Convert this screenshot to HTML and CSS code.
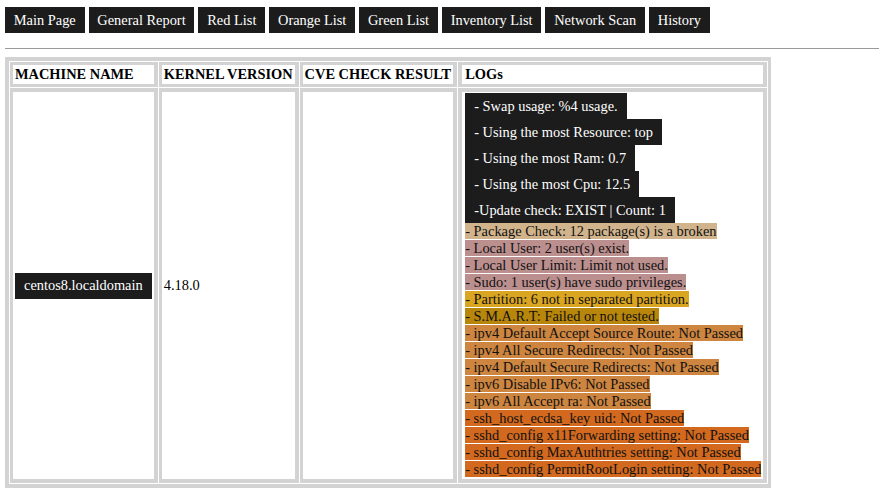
FILE: index.html
```html
<!DOCTYPE html>
<html>
<head>
<meta charset="utf-8">
<title>Report</title>
<link rel="stylesheet" href="styles.css">
</head>
<body>
<nav class="nav">
  <a class="btn">Main Page</a>
  <a class="btn">General Report</a>
  <a class="btn">Red List</a>
  <a class="btn">Orange List</a>
  <a class="btn">Green List</a>
  <a class="btn">Inventory List</a>
  <a class="btn">Network Scan</a>
  <a class="btn">History</a>
</nav>
<hr class="rule">
<table class="report">
  <thead>
    <tr>
      <th>MACHINE NAME</th>
      <th>KERNEL VERSION</th>
      <th>CVE CHECK RESULT</th>
      <th class="logcol">LOGs</th>
    </tr>
  </thead>
  <tbody>
    <tr>
      <td><span class="btn host">centos8.localdomain</span></td>
      <td>4.18.0</td>
      <td></td>
      <td class="logs logcol">
        <div class="btn box">- Swap usage: %4 usage.</div>
        <div class="btn box">- Using the most Resource: top</div>
        <div class="btn box">- Using the most Ram: 0.7</div>
        <div class="btn box">- Using the most Cpu: 12.5</div>
        <div class="btn box">-Update check: EXIST | Count: 1</div>
        <span class="l tan">- Package Check: 12 package(s) is a broken</span><br>
        <span class="l rosy">- Local User: 2 user(s) exist.</span><br>
        <span class="l rosy">- Local User Limit: Limit not used.</span><br>
        <span class="l rosy">- Sudo: 1 user(s) have sudo privileges.</span><br>
        <span class="l gold">- Partition: 6 not in separated partition.</span><br>
        <span class="l dgold">- S.M.A.R.T: Failed or not tested.</span><br>
        <span class="l peru">- ipv4 Default Accept Source Route: Not Passed</span><br>
        <span class="l peru">- ipv4 All Secure Redirects: Not Passed</span><br>
        <span class="l peru">- ipv4 Default Secure Redirects: Not Passed</span><br>
        <span class="l peru">- ipv6 Disable IPv6: Not Passed</span><br>
        <span class="l peru">- ipv6 All Accept ra: Not Passed</span><br>
        <span class="l choc">- ssh_host_ecdsa_key uid: Not Passed</span><br>
        <span class="l choc">- sshd_config x11Forwarding setting: Not Passed</span><br>
        <span class="l choc">- sshd_config MaxAuthtries setting: Not Passed</span><br>
        <span class="l choc">- sshd_config PermitRootLogin setting: Not Passed</span>
      </td>
    </tr>
  </tbody>
</table>
</body>
</html>
```
FILE: styles.css
```css
html, body {
  background: #ffffff;
}
body {
  margin: 0;
  padding: 7px 0 0 5px;
  font-family: "Liberation Serif", "Times New Roman", serif;
  font-size: 14.4px;
  color: #000000;
}
.nav {
  display: flex;
  gap: 4px;
  align-items: flex-start;
}
.btn {
  display: inline-block;
  background: #1c1c1c;
  color: #ffffff;
  padding: 4.5px 8.8px;
  text-decoration: none;
  line-height: 17px;
}
.rule {
  border: none;
  border-top: 1px solid #9a9a9a;
  height: 0;
  margin: 15px 0 8px 0;
}
.report {
  border: 4px solid #d3d3d3;
  border-right-width: 3px;
  border-spacing: 1px;
  border-collapse: separate;
}
.report th,
.report td {
  border: solid #d3d3d3;
  padding: 1px 2px;
  line-height: 17px;
}
.report th {
  border-width: 3px 4px 3px 3px;
  text-align: left;
  font-weight: bold;
}
.report td {
  border-width: 4px 4px 4px 3px;
  vertical-align: middle;
}
.report .logcol {
  border-left-width: 4px;
  padding-left: 3px;
}
.host {
  padding: 4.5px 9px;
}
.logs {
  vertical-align: top;
}
.box {
  display: block;
  width: fit-content;
  padding: 4.5px 9px;
}
.l {
  color: #111111;
}
.tan { background: #d2b48c; }
.rosy { background: #bc8f8f; }
.gold { background: #daa520; }
.dgold { background: #b8860b; }
.peru { background: #cd853f; }
.choc { background: #d2691e; }
```
